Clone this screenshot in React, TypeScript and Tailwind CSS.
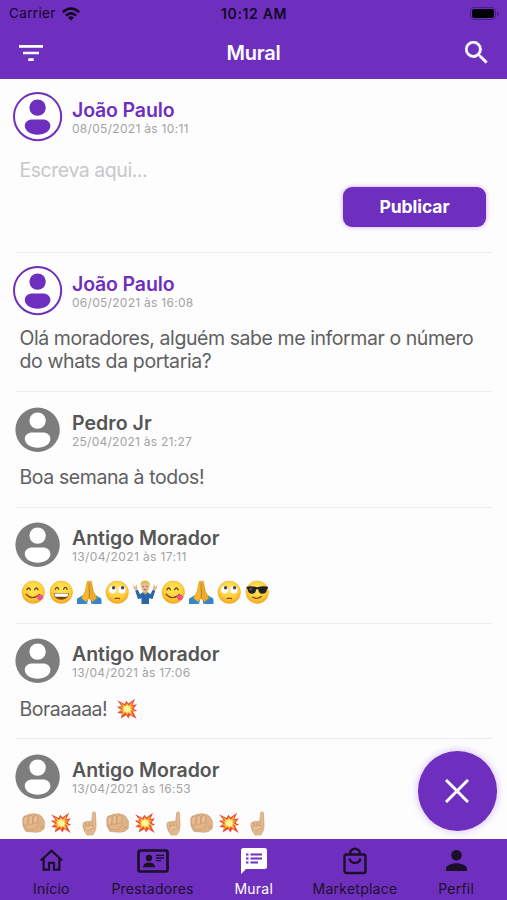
import React from 'react';

type EmojiName = 'yum' | 'grin' | 'pray' | 'roll' | 'shrug' | 'cool' | 'boom' | 'fist' | 'point';

function Face({ children }: { children: React.ReactNode }) {
  return (
    <g>
      <circle cx="12" cy="12" r="11" fill="url(#face)" stroke="#eda52b" strokeWidth=".5" />
      {children}
    </g>
  );
}

function Emoji({ name }: { name: EmojiName }) {
  return (
    <svg viewBox="0 0 24 24" className="size-[24.5px] shrink-0 overflow-visible">
      {name === 'yum' && (
        <Face>
          <path d="M5.8 9.5q1.7-3.4 3.4 0M13.3 9.5q1.7-3.4 3.4 0" fill="none" stroke="#664015" strokeWidth="1.3" strokeLinecap="round" />
          <path d="M5 14q6 6.5 13 .2" fill="none" stroke="#87501b" strokeWidth="1.3" strokeLinecap="round" />
          <path d="M15.3 16.5q2-3 4.4-2.2 3 2 1.3 4.3-2 2.2-4.2 1Z" fill="#ee5586" />
        </Face>
      )}
      {name === 'grin' && (
        <Face>
          <path d="M6.2 9q1.7-3.4 3.4 0M14.3 9q1.7-3.4 3.4 0" fill="none" stroke="#664015" strokeWidth="1.3" strokeLinecap="round" />
          <path d="M4.5 12.8h15q-.5 6.600-7.500 6.600t-7.500-6.600Z" fill="#784318" />
          <path d="M5.2 13.3h13.600q-.2 2.800-1.300 3h-11q-1.100-.2-1.300-3Z" fill="#fff" />
        </Face>
      )}
      {name === 'roll' && (
        <Face>
          <circle cx="7.5" cy="9.5" r="3.8" fill="#fff" stroke="#d9cda3" strokeWidth=".4" />
          <circle cx="16.5" cy="9.5" r="3.8" fill="#fff" stroke="#d9cda3" strokeWidth=".4" />
          <circle cx="8.4" cy="7.6" r="1.7" fill="#55483d" />
          <circle cx="17.2" cy="7.6" r="1.7" fill="#55483d" />
          <path d="M9.8 18.2q2.2-1 4.5 0" fill="none" stroke="#884c18" strokeWidth="1.2" strokeLinecap="round" />
        </Face>
      )}
      {name === 'cool' && (
        <Face>
          <path d="M1.5 6.5q5-.8 10.5.5 5.5-1.3 10.5-.5v1.6l-1 .6q-.5 4.8-4.5 4.8-3.4 0-4-4.2-.9-.8-2 0-.6 4.200-4 4.200-4 0-4.500-4.800l-1-.6Z" fill="#222326" />
          <path d="m4 8 3.500.2-2 2.500Z" fill="#596573" />
          <path d="M7.500 16.800q5 2.700 8.700-.8" fill="none" stroke="#884c18" strokeWidth="1.300" strokeLinecap="round" />
        </Face>
      )}
      {name === 'pray' && (
        <g>
          <path d="M0 18.300 5.600 15l5.200 4.300-1.100 4.200H0ZM24 18.300 18.400 15l-5.200 4.300 1.100 4.200H24Z" fill="#3585ca" />
          <path d="M10 1.300Q11.700.2 11.800 2.300L12 18l-3.500 3.200-4.100-3.500 3.500-6.500Z" fill="#f5b62b" stroke="#d99525" strokeWidth=".5" />
          <path d="M14 1.300Q12.300.2 12.200 2.300L12 18l3.500 3.200 4.100-3.500-3.500-6.500Z" fill="#edab27" stroke="#c98a25" strokeWidth=".5" />
          <path d="m12 3 .1 15" stroke="#ad721e" strokeWidth=".6" />
        </g>
      )}
      {name === 'shrug' && (
        <g>
          <path d="M1 9 0 5l2.300 1.500L3.500 4l1 4.500L3.700 11ZM23 9l1-4-2.300 1.500L20.500 4l-1 4.500.8 2.500Z" fill="#e5b98e" />
          <path d="m2.200 10.500 2.500-1 2.200 4.500 2.600-2h5l2.600 2 2.200-4.500 2.500 1-2.600 8-3.500-.6V23.500H8.300V17.900l-3.500.6Z" fill="#2c66a5" />
          <path d="M9.800 10.500h4.400v2L12 14.300l-2.200-1.800Z" fill="#dba77a" />
          <ellipse cx="12" cy="6.800" rx="4" ry="5" fill="#e9bd91" />
          <path d="M7.500 6.500Q6.600.2 12 .5t4.500 6l-1.500-3-6 .2Z" fill="#e1bd45" />
          <path d="M9.500 6.500h1.400M13.100 6.500h1.400M10.800 9.600q1.200-.7 2.400 0" stroke="#76513c" strokeWidth=".8" />
        </g>
      )}
      {name === 'boom' && (
        <g transform="translate(1.2 .9) scale(.9)">
          <path d="m1 2.500 8 4L11 3l2.300 3L20.500.8 17.500 8l5-1-3.700 4.700 4.200 2.600-5 .6 4.300 8.100-7.100-4.500-2.100 4-2.200-4L5 22.500l1.300-5.600-5.100-.4L5.500 13 .5 9.500l5.500-.3Z" fill="#e94932" />
          <path d="m4.500 5 5 3.400 1.800-2.800L13.700 8l4-4-1.500 5.400 3.300-.6-2.800 3.200 3.300 2.200-3.800.3 2.200 5-4.900-3.200-1.500 2.600-1.800-3-4.200 3.500 1.200-4.500-3.500-.3 3.500-2.500-3.400-2.300 3.800-.2Z" fill="#ffb22e" />
          <path d="m7.500 8 3 1.500 1.400-1.800 1.800 2 2-1.200-.7 3 2 1-2 1.300.8 2.700-2.800-1.400-1.500 1.400-1.200-1.700-2.500.7.900-2.500-1.800-1.300 2-.7Z" fill="#fff7a2" />
        </g>
      )}
      {name === 'fist' && (
        <g transform="translate(1 .5) scale(.95)" stroke="#bd8a5e" strokeWidth=".5" strokeLinejoin="round">
          <path d="M.8 7.500Q1.500 4 4.500 4.200q3-2.200 5.500-1.500 3-1.200 5 .2 3.500-.2 5.500 2.600l2.700 4.500-.3 7.500-3.700 3-4.700 1L4 20.500 1 15Z" fill="#dfb286" />
          <path d="M1 9q.5-4 3.500-4Q7 5.500 6.300 9l-.8 5q-1.500 1.700-3.500.7ZM6.300 7q.7-3.200 3-3 2.400.5 2 4l-.8 5.500q-2 1.300-4.300.3ZM11.300 6.500q1-2.700 3.200-2.400 2.300.6 1.700 4l-.9 4.400-4 .8Z" fill="#e6bd93" />
          <path d="M2.500 14.500q4.500-2.300 8-1.500l5.500-2q2.500 1.200.5 4l-4 3.500-7.500.5Q2.500 18 2.500 14.500Z" fill="#e3b488" />
          <path d="m18.500 17 4-1.500" fill="none" />
        </g>
      )}
      {name === 'point' && (
        <g transform="translate(1.300 0)" stroke="#bd8a5e" strokeWidth=".5" strokeLinejoin="round">
          <path d="M13 11 14 1.700q1.500-2 2.800 0l.6 12.300-.6 5.200-2.700 4.300H8.500L6 20l-1.500-6Z" fill="#e3ba90" />
          <path d="M4.500 12.500Q5.500 9.700 7.500 11l.3 6-1.600 1.200Q4.500 16 4.500 12.500ZM7.500 11q1.800-2.500 3.300 0v5H7.700ZM10.800 10.500q1.700-1.500 2.800.5v5h-2.800Z" fill="#e6bf96" />
          <path d="M6.500 16.500q1.500-3 5.500-2.500t3 3l-3 1q-1 1.500-3.500 1.500" fill="#e6bf96" />
        </g>
      )}
    </svg>
  );
}

function EmojiRow({ names }: { names: EmojiName[] }) {
  return (
    <div className="flex gap-[3.600px] pl-[20.500px]">
      {names.map((n, i) => <Emoji key={i} name={n} />)}
    </div>
  );
}

function Avatar({ mine }: { mine?: boolean }) {
  return (
    <svg viewBox="0 0 50 50" className="size-[50px] shrink-0">
      {mine ? (
        <circle cx="24.600" cy="24.600" r="23.600" fill="#fff" stroke="#6e2fbf" strokeWidth="2" />
      ) : (
        <circle cx="24.600" cy="24.700" r="22.200" fill="#7d7d7d" />
      )}
      <g fill={mine ? '#6e2fbf' : '#fff'}>
        <circle cx="24.600" cy="15.600" r="8.200" />
        <path d="M19.500 27.600h10.200c4.500 0 7.700 2.700 7.700 6.200 0 5.200-5.800 9-12.800 9s-12.800-3.800-12.800-9c0-3.500 3.200-6.200 7.700-6.200Z" />
      </g>
    </svg>
  );
}

interface PostProps {
  name: string;
  date: string;
  mine?: boolean;
  size: string;
  nameStyle: string;
  dateStyle: string;
  children: React.ReactNode;
}

function Post({ name, date, mine, size, nameStyle, dateStyle, children }: PostProps) {
  return (
    <section className={`shrink-0 ${size}`}>
      <div className="flex pl-[12.500px]">
        <Avatar mine={mine} />
        <div className="flex flex-col pl-[9.500px] pt-[6px]">
          <h2 className={`text-[19.500px] leading-[24px] font-semibold whitespace-nowrap ${mine ? 'text-[#6e2fbf]' : 'text-[#555]'} ${nameStyle}`}>{name}</h2>
          <time className={`text-[12px] leading-[14px] text-[#a3a3a3] whitespace-nowrap ${dateStyle}`}>{date}</time>
        </div>
      </div>
      {children}
    </section>
  );
}

function Divider() {
  return <div className="mr-[15px] ml-[16px] h-px shrink-0 bg-[#ececec]" />;
}

function Tab({ label, active, children }: { label: string; active?: boolean; children: React.ReactNode }) {
  return (
    <button className={`flex w-[101.200px] shrink-0 flex-col items-center ${active ? 'text-white' : 'text-[#1b1027]'}`}>
      <span className="flex h-[41px] items-center justify-center pt-[2px]">{children}</span>
      <span className="text-[14px] leading-[18px] whitespace-nowrap tracking-[0.250px]">{label}</span>
    </button>
  );
}

export default function App() {
  return (
    <div className="relative flex h-[900px] w-[507px] flex-col overflow-hidden bg-[#fdfdfd] font-['Inter','Liberation_Sans',sans-serif]">
      <svg className="absolute size-0">
        <defs>
          <radialGradient id="face" cx=".5" cy=".35" r=".65">
            <stop offset="0" stopColor="#ffe75b" />
            <stop offset=".65" stopColor="#ffcf38" />
            <stop offset="1" stopColor="#f3a623" />
          </radialGradient>
        </defs>
      </svg>

      <header className="h-[79px] shrink-0 bg-[#6e2fbf]">
        <div className="grid h-[27px] grid-cols-3 items-center pr-[8px] pl-[9px] text-[#12051f]">
          <div className="flex items-center gap-[6px] text-[13.500px]">
            <span className="tracking-[0.350px]">Carrier</span>
            <svg viewBox="0 0 18 14" className="h-[14px] w-[18px]" fill="none" stroke="currentColor" strokeWidth="2.600">
              <path d="M.8 5.200Q9-2.200 17.200 5.200M3.900 8.600q5.100-4.600 10.200 0" />
              <path d="M6 10.600q3-2.500 6 0l-3 3Z" fill="currentColor" stroke="none" />
            </svg>
          </div>
          <div className="text-center text-[14px] font-semibold tracking-[0.650px]">10:12 AM</div>
          <div className="flex items-center justify-end gap-[1px]">
            <div className="h-[12.500px] w-[26px] rounded-[4px] border border-[#4b1d86] p-[1px]">
              <div className="h-full rounded-[2.500px] bg-black" />
            </div>
            <div className="h-[4px] w-[1.500px] rounded-r bg-[#4b1d86]" />
          </div>
        </div>
        <div className="grid h-[51px] grid-cols-3 items-center pr-[19px] pl-[19px]">
          <svg viewBox="0 0 24 16" className="h-[16px] w-[24px]" fill="#fff">
            <path d="M0 0h24v2.700H0zM4 6.700h16v2.600H4zM9.300 13.200h5.400v2.700H9.300z" />
          </svg>
          <h1 className="text-center text-[20px] leading-[24px] font-semibold tracking-[-0.200px] text-white">Mural</h1>
          <svg viewBox="3 3 17.500 17.500" className="size-[22.500px] justify-self-end" fill="#fff" stroke="#fff" strokeWidth=".25">
            <path d="M15.500 14h-.79l-.28-.27A6.470 6.470 0 0 0 16 9.500 6.500 6.500 0 1 0 9.500 16c1.610 0 3.090-.59 4.230-1.570l.27.28v.79l5 4.990L20.490 19l-4.990-5zm-6 0C7.010 14 5 11.990 5 9.500S7.010 5 9.500 5 14 7.010 14 9.500 11.990 14 9.500 14z" />
          </svg>
        </div>
      </header>

      <main className="flex h-[760px] shrink-0 flex-col overflow-hidden">
        <Post name="João Paulo" date="08/05/2021 às 10:11" mine size="h-[173px] pt-[12.500px]" nameStyle="tracking-[-0.150px]" dateStyle="tracking-[0.300px]">
          <div className="pt-[16px] pl-[19.500px] text-[19.500px] leading-[24px] tracking-[-0.450px] text-[#c7c7ca]">Escreva aqui...</div>
          <div className="flex justify-end pt-[5.500px] pr-[21px]">
            <button className="h-[40px] w-[143px] rounded-[9px] bg-[#6e2fbf] pt-[1px] text-[17.500px] font-bold tracking-[-0.050px] text-white shadow-[0_0_5px_#cbaaf6]">Publicar</button>
          </div>
        </Post>
        <Divider />
        <Post name="João Paulo" date="06/05/2021 às 16:08" mine size="h-[138px] pt-[12.500px]" nameStyle="tracking-[-0.150px]" dateStyle="tracking-[0.280px]">
          <p className="pt-[11.500px] pl-[19.500px] text-[19.500px] leading-[23px] tracking-[-0.430px] whitespace-nowrap text-[#606060]">
            Olá moradores, alguém sabe me informar o número
            <br />
            <span className="tracking-[-0.380px]">do whats da portaria?</span>
          </p>
        </Post>
        <Divider />
        <Post name="Pedro Jr" date="25/04/2021 às 21:27" size="h-[114.500px] pt-[12.500px]" nameStyle="tracking-[0.050px]" dateStyle="tracking-[0.250px]">
          <p className="pt-[11.500px] pl-[19.500px] text-[19.500px] leading-[23px] tracking-[-0.420px] text-[#606060]">Boa semana à todos!</p>
        </Post>
        <Divider />
        <Post name="Antigo Morador" date="13/04/2021 às 17:11" size="h-[115px] pt-[12.500px]" nameStyle="" dateStyle="tracking-[0.380px]">
          <div className="pt-[9.500px]">
            <EmojiRow names={['yum', 'grin', 'pray', 'roll', 'shrug', 'yum', 'pray', 'roll', 'cool']} />
          </div>
        </Post>
        <Divider />
        <Post name="Antigo Morador" date="13/04/2021 às 17:06" size="h-[114.500px] pt-[12.500px]" nameStyle="" dateStyle="tracking-[0.290px]">
          <div className="flex items-center pt-[10.500px] pl-[19.500px] text-[19.500px] leading-[24px] text-[#606060]">
            <p className="w-[95px] tracking-[-0.500px] whitespace-nowrap">Boraaaaa!</p>
            <Emoji name="boom" />
          </div>
        </Post>
        <Divider />
        <Post name="Antigo Morador" date="13/04/2021 às 16:53" size="h-[114.500px] pt-[12.500px]" nameStyle="" dateStyle="tracking-[0.280px]">
          <div className="pt-[9.500px]">
            <EmojiRow names={['fist', 'boom', 'point', 'fist', 'boom', 'point', 'fist', 'boom', 'point']} />
          </div>
        </Post>
      </main>

      <nav className="flex h-[61px] shrink-0 bg-[#6e2fbf] pl-[0.800px]">
        <Tab label="Início">
          <svg viewBox="0 0 24 24" className="size-[27px]" fill="none" stroke="currentColor" strokeWidth="2">
            <path d="M2.500 12 12 3.300l9.500 8.700M5 10.500V20h4.800v-6h4.400v6H19v-9.500" />
          </svg>
        </Tab>
        <Tab label="Prestadores">
          <svg viewBox="0 0 32 24" className="h-[24px] w-[32px]" fill="none" stroke="currentColor">
            <rect x="1.500" y="1.500" width="29" height="21" rx="2" strokeWidth="2.700" />
            <circle cx="12" cy="9" r="3.200" fill="currentColor" stroke="none" />
            <path d="M6 18.200c0-3 2.500-4.700 6-4.700s6 1.700 6 4.700Z" fill="currentColor" stroke="none" />
            <path d="M19 6.300h8M19 9h8M19 11.700h5" strokeWidth="1.300" />
          </svg>
        </Tab>
        <Tab label="Mural" active>
          <svg viewBox="0 0 26 26" className="size-[26px]">
            <path d="M2.500 0h21Q26 0 26 2.500v16q0 2.500-2.500 2.500H5l-5 5V2.500Q0 0 2.500 0Z" fill="#fff" />
            <path d="M5 6.500h2.500M5 10.500h2.500M5 14.500h2.500M9.500 6.500h11.500M9.500 10.500h11.500M9.500 14.500h7.500" stroke="#6e2fbf" strokeWidth="2" />
          </svg>
        </Tab>
        <Tab label="Marketplace">
          <svg viewBox="0 0 24 28" className="h-[28px] w-[24px]" fill="none" stroke="currentColor" strokeWidth="2.400">
            <rect x="1.500" y="7.500" width="21" height="18.500" rx="2" />
            <path d="M7 8V6.700a5 5 0 0 1 10 0V8M6.500 11.500c1.200 6 9.800 6 11 0" />
          </svg>
        </Tab>
        <Tab label="Perfil">
          <svg viewBox="4 4 16 16" className="size-[21px]" fill="currentColor">
            <path d="M12 12c2.210 0 4-1.790 4-4s-1.790-4-4-4-4 1.790-4 4 1.790 4 4 4zm0 2c-2.670 0-8 1.340-8 4v2h16v-2c0-2.660-5.330-4-8-4z" />
          </svg>
        </Tab>
      </nav>

      <button aria-label="Fechar" className="absolute top-[751px] left-[417.500px] flex size-[79.500px] items-center justify-center rounded-full bg-[#6e2fbf] shadow-[0_0_9px_#d3b8f7]">
        <svg viewBox="0 0 24 24" className="size-[24px]" stroke="#fff" strokeWidth="3">
          <path d="m1 1 22 22M23 1 1 23" />
        </svg>
      </button>
    </div>
  );
}
